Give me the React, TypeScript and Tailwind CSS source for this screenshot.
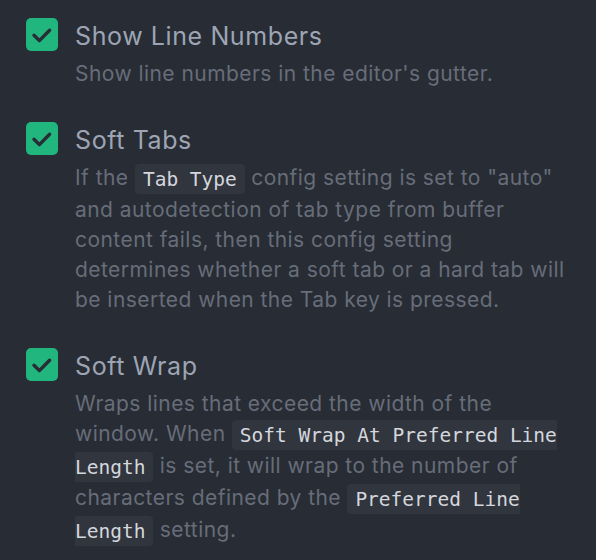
import React from "react";

const Code = ({ children }: { children: React.ReactNode }) => (
  <code className="rounded-[4px] bg-[#31353d] px-[8px] py-[3.5px] font-['DejaVu_Sans_Mono',monospace] text-[19.5px] leading-[32px] tracking-normal text-[#d4d7dd]">
    {children}
  </code>
);

const CheckIcon = () => (
  <div className="h-[33px] w-[32px] shrink-0 rounded-[5px] bg-[#22b67f]">
    <svg width="32" height="33" viewBox="0 0 32 33" fill="none">
      <path d="M8 17.2l5.4 5.4L23.6 12.2" stroke="#282c34" strokeWidth="3.4" strokeLinecap="round" strokeLinejoin="round" />
    </svg>
  </div>
);

const Setting = ({ title, children }: { title: string; children: React.ReactNode }) => (
  <div className="flex gap-[17px]">
    <CheckIcon />
    <div className="flex w-[497px] flex-col">
      <div className="text-[25px] leading-[37px] tracking-[0.6px] text-[#9da5b4]">{title}</div>
      <div className="mt-[4px] text-[21px] leading-[30px] tracking-[0.45px] text-[#676d79]">{children}</div>
    </div>
  </div>
);

export default function App() {
  return (
    <div className="h-[560px] w-[596px] overflow-hidden bg-[#282c34] pl-[26px] pt-[18px] font-['Inter',sans-serif]">
      <div className="flex flex-col gap-[33px]">
        <Setting title="Show Line Numbers">Show line numbers in the editor's gutter.</Setting>
        <Setting title="Soft Tabs">
          If the <Code>Tab Type</Code> config setting is set to "auto" and autodetection of tab type from buffer
          content fails, then this config setting determines whether a soft tab or a hard tab will be inserted when
          the Tab key is pressed.
        </Setting>
        <Setting title="Soft Wrap">
          Wraps lines that exceed the width of the window. When <Code>Soft Wrap At Preferred Line Length</Code> is
          set, it will wrap to the number of characters defined by the <Code>Preferred Line Length</Code> setting.
        </Setting>
      </div>
    </div>
  );
}
